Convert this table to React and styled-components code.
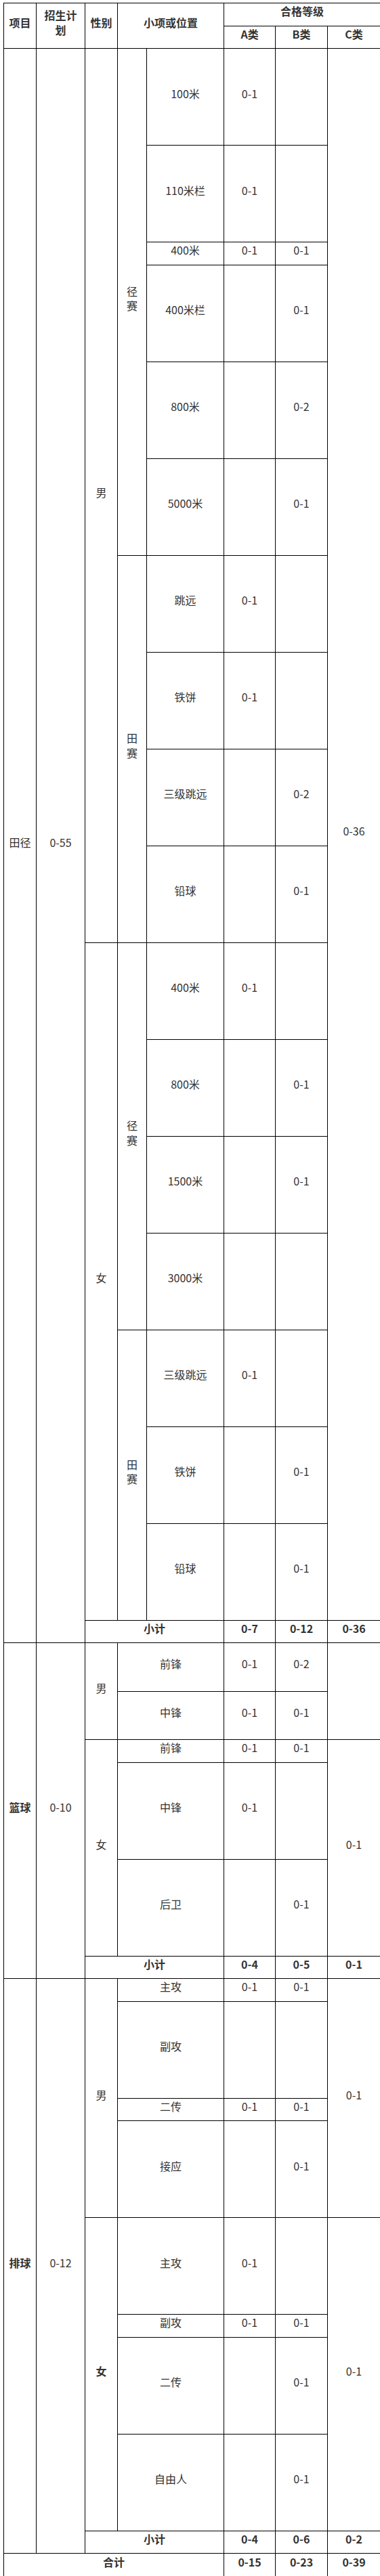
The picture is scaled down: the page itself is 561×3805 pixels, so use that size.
import styled, { createGlobalStyle } from "styled-components";

const GlobalStyle = createGlobalStyle`
  body {
    margin: 0;
    background: #fff;
  }
`;

const Page = styled.div`
  padding: 4px 0 0 5px;
`;

const Table = styled.table`
  border-collapse: collapse;
  table-layout: fixed;
  width: 556px;
  font-family: "Noto Sans CJK SC", "Noto Sans", sans-serif;
  font-size: 16px;
  color: #333;
`;

const Row = styled.tr`
  height: ${(p) => p.$h || 33}px;
`;

const Cell = styled.td`
  border: 1px solid #000;
  padding: 1px 5px 10px;
  line-height: 21.5px;
  text-align: center;
  vertical-align: middle;
  font-weight: ${(p) => (p.$bold ? 700 : 400)};
  word-break: break-all;
`;

const HeadCell = styled(Cell).attrs({ as: "th" })`
  font-weight: 700;
`;

const T = 143;

function Item({ name, a, b, span, h = T }) {
  return (
    <>
      <Cell colSpan={span}>{name}</Cell>
      <Cell>{a}</Cell>
      <Cell>{b}</Cell>
    </>
  );
}

function Subtotal({ a, b, c, label = "小计", span = 3 }) {
  return (
    <>
      <Cell $bold colSpan={span}>
        {label}
      </Cell>
      <Cell $bold>{a}</Cell>
      <Cell $bold>{b}</Cell>
      <Cell $bold>{c}</Cell>
    </>
  );
}

export default function App() {
  return (
    <Page>
      <GlobalStyle />
      <Table>
        <colgroup>
          <col style={{ width: 48 }} />
          <col style={{ width: 72 }} />
          <col style={{ width: 48 }} />
          <col style={{ width: 43 }} />
          <col style={{ width: 114 }} />
          <col style={{ width: 76 }} />
          <col style={{ width: 77 }} />
          <col style={{ width: 78 }} />
        </colgroup>
        <tbody>
          <Row>
            <HeadCell rowSpan={2}>项目</HeadCell>
            <HeadCell rowSpan={2}>招生计划</HeadCell>
            <HeadCell rowSpan={2}>性别</HeadCell>
            <HeadCell rowSpan={2} colSpan={2}>
              小项或位置
            </HeadCell>
            <HeadCell colSpan={3}>合格等级</HeadCell>
          </Row>
          <Row>
            <HeadCell>A类</HeadCell>
            <HeadCell>B类</HeadCell>
            <HeadCell>C类</HeadCell>
          </Row>

          {/* 田径 */}
          <Row $h={T}>
            <Cell rowSpan={18}>田径</Cell>
            <Cell rowSpan={18}>0-55</Cell>
            <Cell rowSpan={10}>男</Cell>
            <Cell rowSpan={6}>
              径<br />赛
            </Cell>
            <Item name="100米" a="0-1" />
            <Cell rowSpan={17}>0-36</Cell>
          </Row>
          <Row $h={T}>
            <Item name="110米栏" a="0-1" />
          </Row>
          <Row>
            <Item name="400米" a="0-1" b="0-1" />
          </Row>
          <Row $h={T}>
            <Item name="400米栏" b="0-1" />
          </Row>
          <Row $h={T}>
            <Item name="800米" b="0-2" />
          </Row>
          <Row $h={T}>
            <Item name="5000米" b="0-1" />
          </Row>
          <Row $h={T}>
            <Cell rowSpan={4}>
              田<br />赛
            </Cell>
            <Item name="跳远" a="0-1" />
          </Row>
          <Row $h={T}>
            <Item name="铁饼" a="0-1" />
          </Row>
          <Row $h={T}>
            <Item name="三级跳远" b="0-2" />
          </Row>
          <Row $h={T}>
            <Item name="铅球" b="0-1" />
          </Row>
          <Row $h={T}>
            <Cell rowSpan={7}>女</Cell>
            <Cell rowSpan={4}>
              径<br />赛
            </Cell>
            <Item name="400米" a="0-1" />
          </Row>
          <Row $h={T}>
            <Item name="800米" b="0-1" />
          </Row>
          <Row $h={T}>
            <Item name="1500米" b="0-1" />
          </Row>
          <Row $h={T}>
            <Item name="3000米" />
          </Row>
          <Row $h={T}>
            <Cell rowSpan={3}>
              田<br />赛
            </Cell>
            <Item name="三级跳远" a="0-1" />
          </Row>
          <Row $h={T}>
            <Item name="铁饼" b="0-1" />
          </Row>
          <Row $h={T}>
            <Item name="铅球" b="0-1" />
          </Row>
          <Row>
            <Subtotal a="0-7" b="0-12" c="0-36" />
          </Row>

          {/* 篮球 */}
          <Row $h={71.5}>
            <Cell $bold rowSpan={6}>
              篮球
            </Cell>
            <Cell rowSpan={6}>0-10</Cell>
            <Cell rowSpan={2}>男</Cell>
            <Item span={2} name="前锋" a="0-1" b="0-2" />
            <Cell rowSpan={2} />
          </Row>
          <Row $h={71.5}>
            <Item span={2} name="中锋" a="0-1" b="0-1" />
          </Row>
          <Row>
            <Cell rowSpan={3}>女</Cell>
            <Item span={2} name="前锋" a="0-1" b="0-1" />
            <Cell rowSpan={3}>0-1</Cell>
          </Row>
          <Row $h={T}>
            <Item span={2} name="中锋" a="0-1" />
          </Row>
          <Row $h={T}>
            <Item span={2} name="后卫" b="0-1" />
          </Row>
          <Row>
            <Subtotal a="0-4" b="0-5" c="0-1" />
          </Row>

          {/* 排球 */}
          <Row>
            <Cell $bold rowSpan={9}>
              排球
            </Cell>
            <Cell rowSpan={9}>0-12</Cell>
            <Cell rowSpan={4}>男</Cell>
            <Item span={2} name="主攻" a="0-1" b="0-1" />
            <Cell rowSpan={4}>0-1</Cell>
          </Row>
          <Row $h={T}>
            <Item span={2} name="副攻" />
          </Row>
          <Row>
            <Item span={2} name="二传" a="0-1" b="0-1" />
          </Row>
          <Row $h={T}>
            <Item span={2} name="接应" b="0-1" />
          </Row>
          <Row $h={T}>
            <Cell $bold rowSpan={4}>
              女
            </Cell>
            <Item span={2} name="主攻" a="0-1" />
            <Cell rowSpan={4}>0-1</Cell>
          </Row>
          <Row>
            <Item span={2} name="副攻" a="0-1" b="0-1" />
          </Row>
          <Row $h={T}>
            <Item span={2} name="二传" b="0-1" />
          </Row>
          <Row $h={T}>
            <Item span={2} name="自由人" b="0-1" />
          </Row>
          <Row>
            <Subtotal a="0-4" b="0-6" c="0-2" />
          </Row>

          <Row $h={36}>
            <Subtotal label="合计" span={5} a="0-15" b="0-23" c="0-39" />
          </Row>
        </tbody>
      </Table>
    </Page>
  );
}
